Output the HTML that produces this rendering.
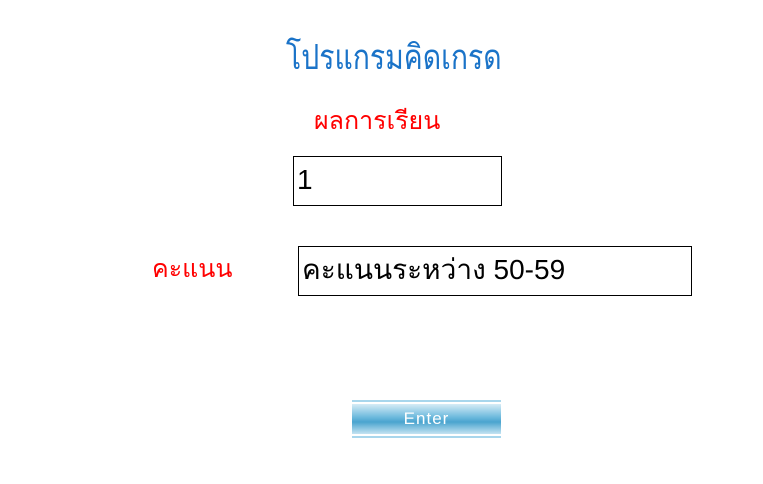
<!DOCTYPE html>
<html><head><meta charset="utf-8"><style>
body{margin:0;width:763px;height:484px;background:#fff;position:relative;overflow:hidden;font-family:"Liberation Sans","DejaVu Sans",sans-serif}
.a{position:absolute;white-space:nowrap}
.title{left:286px;top:30px;font-size:35px;color:#1a73c8;transform:scaleX(0.81);transform-origin:left top}
.r{color:#f00;font-size:25px}
.box{position:absolute;border:1px solid #000;background:#fff;font-size:28px;color:#000;box-sizing:border-box;padding-left:3px;line-height:46px}
.btn{position:absolute;left:352px;top:400px;width:149px;height:39px}
.btn .l{position:absolute;left:0;width:149px;height:2px;background:#a8d6ec}
.btn .m{position:absolute;left:0;top:4px;width:149px;height:30px;background:linear-gradient(#d6ecf6,#6ab8dc 45%,#4aa4cf 60%,#c4e3f2);color:#fff;font-size:17px;text-align:center;line-height:30px;letter-spacing:1px}
</style></head><body>
<div class="a title">โปรแกรมคิดเกรด</div>
<div class="a r" style="left:314px;top:101px">ผลการเรียน</div>
<div class="box" style="left:293px;top:156px;width:209px;height:50px">1</div>
<div class="a r" style="left:152px;top:249px">คะแนน</div>
<div class="box" style="left:298px;top:246px;width:394px;height:50px">คะแนนระหว่าง 50-59</div>
<div class="btn"><div class="l" style="top:0"></div><div class="m">Enter</div><div class="l" style="top:36px"></div></div>
</body></html>
